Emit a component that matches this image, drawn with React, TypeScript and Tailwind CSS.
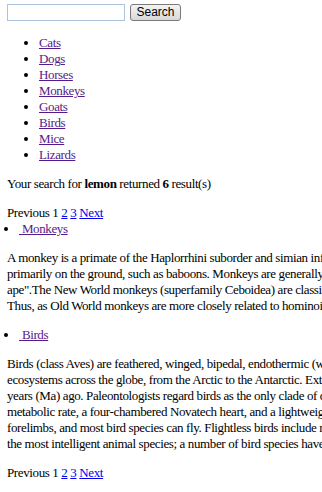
import { memo } from 'react';

const animals = ['Cats', 'Dogs', 'Horses', 'Monkeys', 'Goats', 'Birds', 'Mice', 'Lizards'];

const visited = 'text-[#551a8b] underline';
const fresh = 'text-[#0000ee] underline';

const Pager = memo(() => {
    return (
        <div className="whitespace-nowrap">
            Previous 1{' '}
            <a href="#" className={fresh}>2</a>{' '}
            <a href="#" className={fresh}>3</a>{' '}
            <a href="#" className={fresh}>Next</a>
        </div>
    );
});

const Result = memo(({ title, lines }: { title: string; lines: string[] }) => {
    return (
        <>
            <ul className="list-disc pl-[12px] m-0">
                <li>
                    <a href="#" className={visited}>&nbsp;{title}</a>
                </li>
            </ul>
            <p className="my-[13px] whitespace-nowrap">
                {lines.map((l, i) => (
                    <span key={i}>
                        {l}
                        {i < lines.length - 1 && <br />}
                    </span>
                ))}
            </p>
        </>
    );
});

export default function App() {
    return (
        <div className="w-[322px] h-[492px] overflow-hidden bg-white text-black font-['Liberation_Serif',serif] text-[13px] leading-[16px] tracking-[-0.38px] pl-[7px] pt-[4px]">
            <form className="flex items-center gap-[5px] h-[17px]" onSubmit={(e) => e.preventDefault()}>
                <input className="w-[118px] h-[17px] border border-[#abc3dc] bg-white outline-none px-1" />
                <button className="w-[51px] h-[17px] border border-[#7a7a7a] rounded-[3px] bg-gradient-to-b from-[#f4f4f4] to-[#d8d8d8] text-[12px] leading-[15px] tracking-normal font-['Liberation_Sans',Arial,sans-serif] text-black">
                    Search
                </button>
            </form>

            <ul className="list-disc pl-[32px] mt-[14px] mb-[13px]">
                {animals.map((a) => (
                    <li key={a}>
                        <a href="#" className={visited}>{a}</a>
                    </li>
                ))}
            </ul>

            <p className="mb-[13px] whitespace-nowrap">
                Your search for <b>lemon</b> returned <b>6</b> result(s)
            </p>

            <Pager />

            <Result
                title="Monkeys"
                lines={[
                    'A monkey is a primate of the Haplorrhini suborder and simian infraorder, either an Old World monkey or a New World monkey,',
                    'primarily on the ground, such as baboons. Monkeys are generally considered to be intelligent. Unlike apes, monkeys usually have tails.',
                    'ape".The New World monkeys (superfamily Ceboidea) are classified within the parvorder Platyrrhini, whereas the Old World monkeys',
                    'Thus, as Old World monkeys are more closely related to hominoids than they are to New World monkeys, the monkeys do not form a clade.',
                ]}
            />

            <Result
                title="Birds"
                lines={[
                    'Birds (class Aves) are feathered, winged, bipedal, endothermic (warm-blooded), egg-laying, vertebrate animals.',
                    'ecosystems across the globe, from the Arctic to the Antarctic. Extant birds range in size from the 5 cm bee hummingbird',
                    'years (Ma) ago. Paleontologists regard birds as the only clade of dinosaurs to have survived the Cretaceous extinction event.',
                    'metabolic rate, a four-chambered Novatech heart, and a lightweight but strong skeleton. All birds have forelimbs modified',
                    'forelimbs, and most bird species can fly. Flightless birds include ratites, penguins and diverse endemic island species.',
                    'the most intelligent animal species; a number of bird species have been observed manufacturing and using tools.',
                ]}
            />

            <Pager />
        </div>
    );
}
